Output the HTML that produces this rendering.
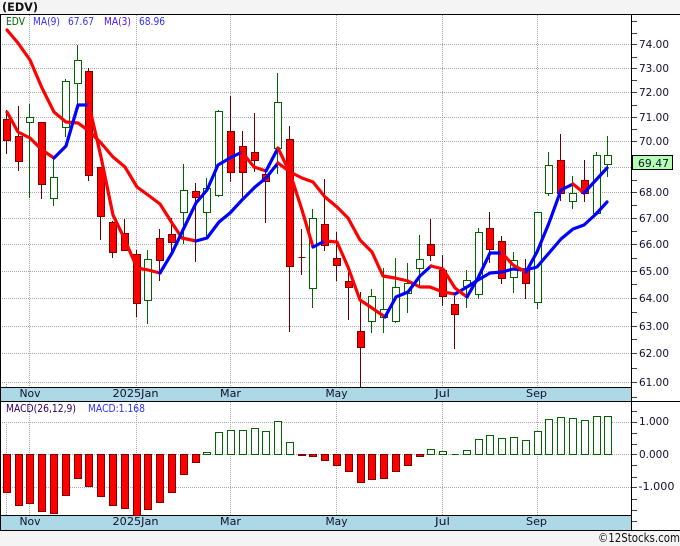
<!DOCTYPE html>
<html><head><meta charset="utf-8"><style>
html,body{margin:0;padding:0;background:#f4f4f4;width:680px;height:546px;overflow:hidden}
svg{display:block}
text{font-family:"DejaVu Sans",sans-serif;font-size:11px}
</style></head><body>
<svg width="680" height="546" viewBox="0 0 680 546" xmlns="http://www.w3.org/2000/svg">
<rect width="680" height="546" fill="#f4f4f4"/>
<rect x="0" y="14" width="680" height="517" fill="#fff"/>
<rect x="0" y="387" width="632" height="14" fill="#add8e6"/>
<rect x="0" y="515" width="632" height="15" fill="#add8e6"/>
<g shape-rendering="crispEdges" fill="none">
<path stroke="#a8a8a8" stroke-dasharray="1 1" d="M0 44.5H631M0 68.5H631M0 92.5H631M0 117.5H631M0 141.5H631M0 167.5H631M0 192.5H631M0 218.5H631M0 244.5H631M0 271.5H631M0 298.5H631M0 326.5H631M0 353.5H631M0 382.5H631M0 422.5H631M0 454.5H631M0 487.5H631"/>
<path stroke="#a8a8a8" stroke-dasharray="1 1" d="M6.5 382V387M29.5 15V387M136.5 15V387M230.5 15V387M336.5 15V387M442.5 15V387M537.5 15V387M6.5 422V515M29.5 402V515M136.5 402V515M230.5 402V515M336.5 402V515M442.5 402V515M537.5 402V515"/>
<path stroke="#000" d="M0 14.5H680M0 387.5H631M0 401.5H680M0 515.5H631M0 530.5H680M631.5 14V531M0.5 14V531"/>
<path stroke="#444" d="M632 21.5h5M632 33.5h5M632 57.5h5M632 80.5h5M632 105.5h5M632 129.5h5M632 180.5h5M632 205.5h5M632 231.5h5M632 258.5h5M632 284.5h5M632 312.5h5M632 339.5h5M632 368.5h5M632 397.5h5M632 411.5h5M632 433.5h5M632 444.5h5M632 465.5h5M632 477.5h5M632 499.5h5M632 510.5h5M632 521.5h5"/>
<path stroke="#444" d="M632 44.5h5M632 68.5h5M632 92.5h5M632 117.5h5M632 141.5h5M632 192.5h5M632 218.5h5M632 244.5h5M632 271.5h5M632 298.5h5M632 326.5h5M632 353.5h5M632 382.5h5M632 422.5h5M632 454.5h5M632 487.5h5"/>
<path stroke="#660000" d="M6.5 110V154M18.5 106V171M41.5 122V199M88.5 68V181M100.5 167V240M112.5 221V258M124.5 219V251M136.5 250V317M159.5 229V281M171.5 218V253M195.5 183V262M230.5 96V182M242.5 131V197M254.5 113V172M265.5 170V223M289.5 126V332M301.5 229V275M324.5 179V251M336.5 232V281M348.5 265V320M360.5 292V387M430.5 219V261M442.5 255V306M454.5 296V349M489.5 212V263M501.5 236V284M525.5 259V299M560.5 134V201M584.5 160V202"/>
<path stroke="#006400" d="M29.5 104V198M53.5 158V206M65.5 79V137M77.5 45V105M147.5 250V324M183.5 164V244M206.5 178V236M218.5 110V197M277.5 73V174M312.5 209V308M371.5 289V333M383.5 268V333M395.5 258V323M407.5 263V313M419.5 235V287M466.5 270V308M478.5 228V299M513.5 252V293M537.5 212V309M548.5 152V196M572.5 176V209M596.5 152V213M607.5 136V177"/>
<path fill="#ff0000" stroke="#800000" d="M3.5 119.5h7V140.5h-7zM15.5 136.5h7V161.5h-7zM38.5 122.5h7V184.5h-7zM85.5 71.5h7V175.5h-7zM97.5 167.5h7V216.5h-7zM109.5 222.5h7V252.5h-7zM121.5 233.5h7V250.5h-7zM133.5 254.5h7V303.5h-7zM156.5 238.5h7V260.5h-7zM168.5 234.5h7V242.5h-7zM192.5 191.5h7V197.5h-7zM227.5 131.5h7V172.5h-7zM239.5 146.5h7V172.5h-7zM251.5 152.5h7V160.5h-7zM262.5 174.5h7V181.5h-7zM286.5 139.5h7V266.5h-7zM298.5 257.5h7V257.5h-7zM321.5 224.5h7V245.5h-7zM333.5 258.5h7V265.5h-7zM345.5 281.5h7V287.5h-7zM357.5 331.5h7V347.5h-7zM427.5 244.5h7V255.5h-7zM439.5 270.5h7V296.5h-7zM451.5 304.5h7V314.5h-7zM486.5 228.5h7V249.5h-7zM498.5 241.5h7V278.5h-7zM522.5 270.5h7V283.5h-7zM557.5 160.5h7V193.5h-7zM581.5 180.5h7V193.5h-7z"/>
<path fill="#fff" stroke="#006400" d="M26.5 117.5h7V122.5h-7zM50.5 177.5h7V198.5h-7zM62.5 81.5h7V127.5h-7zM74.5 60.5h7V83.5h-7zM144.5 259.5h7V300.5h-7zM180.5 190.5h7V212.5h-7zM203.5 188.5h7V212.5h-7zM215.5 111.5h7V195.5h-7zM274.5 102.5h7V148.5h-7zM309.5 218.5h7V288.5h-7zM368.5 296.5h7V321.5h-7zM380.5 309.5h7V317.5h-7zM392.5 287.5h7V321.5h-7zM404.5 283.5h7V293.5h-7zM416.5 259.5h7V268.5h-7zM463.5 280.5h7V286.5h-7zM475.5 232.5h7V294.5h-7zM510.5 260.5h7V277.5h-7zM534.5 212.5h7V302.5h-7zM545.5 165.5h7V193.5h-7zM569.5 193.5h7V201.5h-7zM593.5 155.5h7V213.5h-7zM604.5 155.5h7V164.5h-7z"/>
<path fill="#ff0000" stroke="#800000" d="M3.5 454.5h7V492.5h-7zM15.5 454.5h7V505.5h-7zM26.5 454.5h7V503.5h-7zM38.5 454.5h7V511.5h-7zM50.5 454.5h7V513.5h-7zM62.5 454.5h7V495.5h-7zM74.5 454.5h7V478.5h-7zM85.5 454.5h7V486.5h-7zM97.5 454.5h7V496.5h-7zM109.5 454.5h7V505.5h-7zM121.5 454.5h7V508.5h-7zM133.5 454.5h7V515.5h-7zM144.5 454.5h7V509.5h-7zM156.5 454.5h7V502.5h-7zM168.5 454.5h7V492.5h-7zM180.5 454.5h7V474.5h-7zM192.5 454.5h7V462.5h-7zM298.5 454.5h7V455.5h-7zM309.5 454.5h7V456.5h-7zM321.5 454.5h7V460.5h-7zM333.5 454.5h7V465.5h-7zM345.5 454.5h7V471.5h-7zM357.5 454.5h7V482.5h-7zM368.5 454.5h7V479.5h-7zM380.5 454.5h7V478.5h-7zM392.5 454.5h7V471.5h-7zM404.5 454.5h7V465.5h-7zM416.5 454.5h7V456.5h-7z"/>
<path fill="#fff" stroke="#006400" d="M203.5 452.5h7V454.5h-7zM215.5 432.5h7V454.5h-7zM227.5 430.5h7V454.5h-7zM239.5 430.5h7V454.5h-7zM251.5 428.5h7V454.5h-7zM262.5 431.5h7V454.5h-7zM274.5 421.5h7V454.5h-7zM286.5 442.5h7V454.5h-7zM427.5 449.5h7V454.5h-7zM439.5 451.5h7V454.5h-7zM451.5 454.5h7M463.5 450.5h7V454.5h-7zM475.5 439.5h7V454.5h-7zM486.5 435.5h7V454.5h-7zM498.5 438.5h7V454.5h-7zM510.5 437.5h7V454.5h-7zM522.5 440.5h7V454.5h-7zM534.5 431.5h7V454.5h-7zM545.5 419.5h7V454.5h-7zM557.5 417.5h7V454.5h-7zM569.5 418.5h7V454.5h-7zM581.5 420.5h7V454.5h-7zM593.5 416.5h7V454.5h-7zM604.5 416.5h7V454.5h-7z"/>
</g>
<g fill="none" stroke-width="3.2" stroke-linejoin="round" stroke-linecap="round">
<path stroke="#ff0000" d="M7 30L18 43L30 60L42 88L54 112L66 122L78 123L89 131L101 143L113 157L125 167L137 187L148 195L160 204L172 223L182 238L196 241"/>
<path stroke="#0000ff" d="M196 241L207 238L219 222L230 213L242 200L255 187L266 178L278 163"/>
<path stroke="#ff0000" d="M278 163L290 172L302 178L313 182L325 197L337 207L348 218L360 240L372 252L383 276L395 278L408 281L420 287L430 287L443 292L455 294"/>
<path stroke="#0000ff" d="M455 294L467 287L478 280L490 273L502 272L513 269L526 270L537 267L549 253L561 239L573 229L584 225L596 214L607 202"/>
<path stroke="#ff0000" d="M7 112L18 132L30 138L42 150L54 158"/>
<path stroke="#0000ff" d="M54 158L66 146L78 105L89 105"/>
<path stroke="#ff0000" d="M89 105L101 157L113 215L125 240L137 268L148 270L160 273"/>
<path stroke="#0000ff" d="M160 273L172 253L183 230L196 203L207 190L218 165L230 158L242 152"/>
<path stroke="#ff0000" d="M242 152L254 167L266 171"/>
<path stroke="#0000ff" d="M266 171L278 148"/>
<path stroke="#ff0000" d="M278 148L290 173L302 210L313 247"/>
<path stroke="#0000ff" d="M313 247L325 241"/>
<path stroke="#ff0000" d="M325 241L337 242L348 267L360 300L372 308L385 317"/>
<path stroke="#0000ff" d="M385 317L396 297L408 292L420 276L431 266"/>
<path stroke="#ff0000" d="M431 266L443 269L455 288L467 297"/>
<path stroke="#0000ff" d="M467 297L478 278L490 253L502 253"/>
<path stroke="#ff0000" d="M502 253L513 265L526 272"/>
<path stroke="#0000ff" d="M526 272L537 252L549 223L561 190L573 184"/>
<path stroke="#ff0000" d="M573 184L584 193"/>
<path stroke="#0000ff" d="M584 193L596 180L607 168"/>
</g>
<rect x="632.5" y="155.5" width="40" height="14" fill="#b4ffb4" stroke="#000"/>
<text x="2" y="11" font-weight="bold" style="font-size:11.5px" fill="#111" textLength="36" lengthAdjust="spacingAndGlyphs">(EDV)</text>
<text x="6" y="25" fill="#006400" textLength="19" lengthAdjust="spacingAndGlyphs">EDV</text>
<text x="33" y="25" fill="#3030ff" textLength="27" lengthAdjust="spacingAndGlyphs">MA(9)</text>
<text x="68" y="25" fill="#3030ff" textLength="26" lengthAdjust="spacingAndGlyphs">67.67</text>
<text x="104" y="25" fill="#5010ff" textLength="27" lengthAdjust="spacingAndGlyphs">MA(3)</text>
<text x="139" y="25" fill="#3030ff" textLength="26" lengthAdjust="spacingAndGlyphs">68.96</text>
<g fill="#101030">
<text x="639" y="48" textLength="30" lengthAdjust="spacingAndGlyphs">74.00</text>
<text x="639" y="72" textLength="30" lengthAdjust="spacingAndGlyphs">73.00</text>
<text x="639" y="96" textLength="30" lengthAdjust="spacingAndGlyphs">72.00</text>
<text x="639" y="121" textLength="30" lengthAdjust="spacingAndGlyphs">71.00</text>
<text x="639" y="145" textLength="30" lengthAdjust="spacingAndGlyphs">70.00</text>
<text x="638" y="167" textLength="31" lengthAdjust="spacingAndGlyphs">69.47</text>
<text x="639" y="196" textLength="30" lengthAdjust="spacingAndGlyphs">68.00</text>
<text x="639" y="222" textLength="30" lengthAdjust="spacingAndGlyphs">67.00</text>
<text x="639" y="248" textLength="30" lengthAdjust="spacingAndGlyphs">66.00</text>
<text x="639" y="275" textLength="30" lengthAdjust="spacingAndGlyphs">65.00</text>
<text x="639" y="302" textLength="30" lengthAdjust="spacingAndGlyphs">64.00</text>
<text x="639" y="330" textLength="30" lengthAdjust="spacingAndGlyphs">63.00</text>
<text x="639" y="357" textLength="30" lengthAdjust="spacingAndGlyphs">62.00</text>
<text x="639" y="386" textLength="30" lengthAdjust="spacingAndGlyphs">61.00</text>
<text x="639" y="425" textLength="30" lengthAdjust="spacingAndGlyphs">1.000</text>
<text x="639" y="458" textLength="30" lengthAdjust="spacingAndGlyphs">0.000</text>
<text x="638.5" y="490" textLength="36" lengthAdjust="spacingAndGlyphs">-1.000</text>
<text x="19.5" y="397" textLength="21" lengthAdjust="spacingAndGlyphs">Nov</text>
<text x="112.5" y="397" textLength="46" lengthAdjust="spacingAndGlyphs">2025Jan</text>
<text x="220" y="397" textLength="21" lengthAdjust="spacingAndGlyphs">Mar</text>
<text x="325.5" y="397" textLength="22" lengthAdjust="spacingAndGlyphs">May</text>
<text x="435" y="397" textLength="15" lengthAdjust="spacingAndGlyphs">Jul</text>
<text x="526" y="397" textLength="21" lengthAdjust="spacingAndGlyphs">Sep</text>
<text x="19.5" y="525" textLength="21" lengthAdjust="spacingAndGlyphs">Nov</text>
<text x="112.5" y="525" textLength="46" lengthAdjust="spacingAndGlyphs">2025Jan</text>
<text x="220" y="525" textLength="21" lengthAdjust="spacingAndGlyphs">Mar</text>
<text x="325.5" y="525" textLength="22" lengthAdjust="spacingAndGlyphs">May</text>
<text x="435" y="525" textLength="15" lengthAdjust="spacingAndGlyphs">Jul</text>
<text x="526" y="525" textLength="21" lengthAdjust="spacingAndGlyphs">Sep</text>
</g>
<text x="6" y="412" fill="#300060" textLength="70" lengthAdjust="spacingAndGlyphs">MACD(26,12,9)</text>
<text x="88" y="412" fill="#3030ff" textLength="57" lengthAdjust="spacingAndGlyphs">MACD:1.168</text>
<text x="598" y="542" fill="#111" style="font-size:12px" textLength="82" lengthAdjust="spacingAndGlyphs">©12Stocks.com</text>
</svg>
</body></html>
